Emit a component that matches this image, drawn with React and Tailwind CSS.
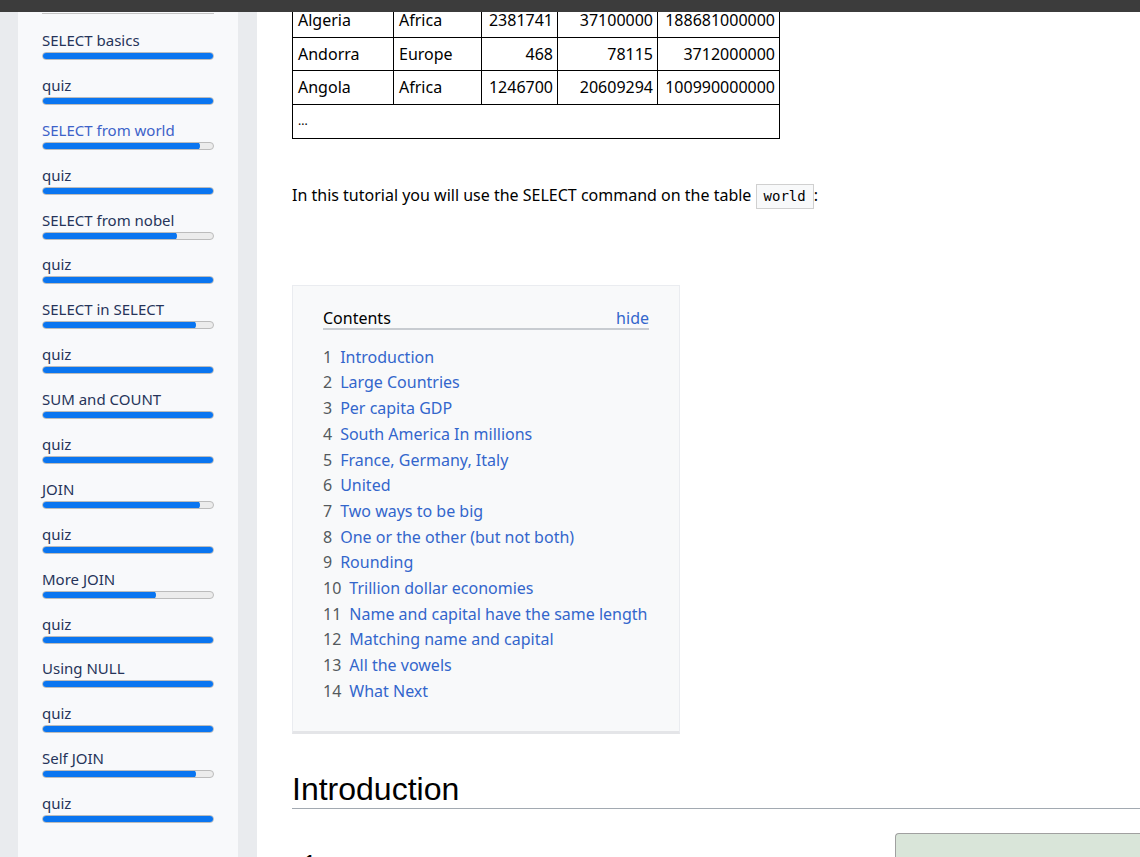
import React from "react";

const items = [
  ["SELECT basics", 100],
  ["quiz", 100],
  ["SELECT from world", 92, true],
  ["quiz", 100],
  ["SELECT from nobel", 78],
  ["quiz", 100],
  ["SELECT in SELECT", 89.5],
  ["quiz", 100],
  ["SUM and COUNT", 100],
  ["quiz", 100],
  ["JOIN", 92],
  ["quiz", 100],
  ["More JOIN", 66],
  ["quiz", 100],
  ["Using NULL", 100],
  ["quiz", 100],
  ["Self JOIN", 89.5],
  ["quiz", 100],
];

const rows = [
  ["Algeria", "Africa", "2381741", "37100000", "188681000000"],
  ["Andorra", "Europe", "468", "78115", "3712000000"],
  ["Angola", "Africa", "1246700", "20609294", "100990000000"],
];

const toc = [
  "Introduction",
  "Large Countries",
  "Per capita GDP",
  "South America In millions",
  "France, Germany, Italy",
  "United",
  "Two ways to be big",
  "One or the other (but not both)",
  "Rounding",
  "Trillion dollar economies",
  "Name and capital have the same length",
  "Matching name and capital",
  "All the vowels",
  "What Next",
];

function Sidebar() {
  return (
    <div className="w-[220px] shrink-0 bg-[#f8f9fb] px-[24px] pt-[13px]">
      <div className="h-px bg-[#c4c4c4]" />
      <div className="mt-[16px] flex flex-col">
        {items.map(([label, pct, hl], i) => (
          <div key={i} className="h-[44.9px]">
            <div
              className={
                "text-[15px] leading-[20px] " +
                (hl ? "text-[#3d62c9]" : "text-[#26345a]")
              }
            >
              {label}
            </div>
            <div className="mt-[2px] h-[8px] rounded-full border border-[#bcbcbc] bg-[#ececec] overflow-hidden relative">
              <div
                className="h-full rounded-full bg-[#0a75f0] -m-px"
                style={{ width: `calc(${pct}% + 2px)`, height: "8px" }}
              />
            </div>
          </div>
        ))}
      </div>
    </div>
  );
}

function Main() {
  const w = ["w-[101px]", "w-[88px]", "w-[76px]", "w-[100px]", "w-[122px]"];
  return (
    <div className="flex-1 min-w-0 bg-white pl-[35px] pt-[3px] overflow-hidden text-black">
      <table className="table-fixed border-collapse w-[488px] text-[16px]">
        <colgroup>
          {w.map((c, i) => (
            <col key={i} className={c} />
          ))}
        </colgroup>
        <tbody>
          {rows.map((r, i) => (
            <tr key={i}>
              {r.map((c, j) => (
                <td
                  key={j}
                  className={
                    "border border-black py-[6px] leading-[20.67px] whitespace-nowrap " +
                    (j < 2 ? "text-left pl-[5px]" : "text-right pr-[4px]")
                  }
                >
                  {c}
                </td>
              ))}
            </tr>
          ))}
          <tr>
            <td colSpan={5} className="border border-black py-[6px] pl-[5px] leading-[20.67px] text-[12px]">
              ...
            </td>
          </tr>
        </tbody>
      </table>

      <p className="mt-[44px] text-[16px] leading-[24px]">
        In this tutorial you will use the SELECT command on the table{" "}
        <code className="inline-block border border-[#d0d0d0] bg-[#f8f9fa] px-[7px] leading-[23px] text-[14px] font-['DejaVu_Sans_Mono',monospace]">
          world
        </code>
        :
      </p>

      <div className="mt-[76px] w-[388px] border border-[#eaecf0] border-b-[3px] border-b-[#e4e5e8] bg-[#f8f9fa] px-[30px] pt-[22px] pb-[26px]">
        <div className="flex justify-between border-b-2 border-[#c8ccd1] text-[16px] leading-[20px]">
          <span className="text-black">Contents</span>
          <span className="text-[#3366cc]">hide</span>
        </div>
        <ul className="mt-[15px] text-[16px] leading-[25.7px]">
          {toc.map((t, i) => (
            <li key={i} className="whitespace-nowrap">
              <span className="text-[#54595d]">{i + 1}</span>
              <span className="ml-[8px] text-[#3366cc]">{t}</span>
            </li>
          ))}
        </ul>
      </div>

      <h2 className="mt-[36px] border-b border-[#a2a9b1] text-[32px] leading-[38px] font-['Liberation_Sans',sans-serif] font-normal">
        Introduction
      </h2>

      <div className="mt-[24px] flex">
        <div className="flex-1 pl-[10px] text-[26px] leading-[24px] pt-[18px]">1</div>
        <div className="w-[245px] shrink-0 h-[40px] rounded-tl-[4px] border border-r-0 border-[#a0a0a0] bg-[#d9e5d9]" />
      </div>
    </div>
  );
}

export default function App() {
  return (
    <div className="relative h-[857px] w-[1140px] overflow-hidden bg-[#e9ebee] font-['Noto_Sans',sans-serif]">
      <div className="absolute left-0 right-0 top-0 z-10 h-[12px] bg-[#3c3c3c]" />
      <div className="flex h-full">
        <div className="w-[18px] shrink-0" />
        <Sidebar />
        <div className="w-[19px] shrink-0" />
        <Main />
      </div>
    </div>
  );
}
